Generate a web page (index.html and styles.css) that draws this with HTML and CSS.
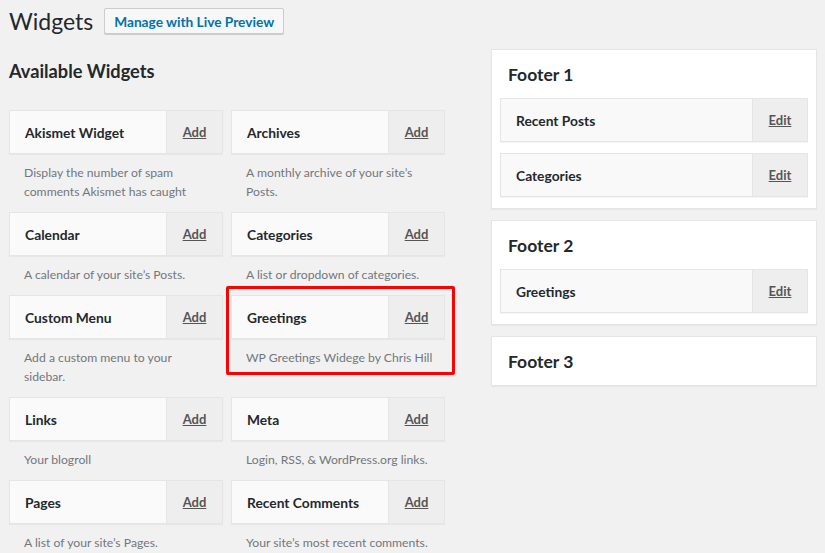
FILE: index.html
```html
<!DOCTYPE html>
<html>
<head>
<meta charset="utf-8">
<title>Widgets</title>
<link rel="stylesheet" href="styles.css">
</head>
<body>
<div class="wrap">
  <div class="head">
    <h1 class="title">Widgets</h1>
    <a class="btn">Manage with Live Preview</a>
  </div>
  <div class="cols">
    <div class="avail">
      <h2 class="avail-title">Available Widgets</h2>
      <div class="grid">
        <div class="widget">
          <div class="wbar"><span class="wname">Akismet Widget</span><span class="wact">Add</span></div>
          <p class="wdesc">Display the number of spam comments Akismet has caught</p>
        </div>
        <div class="widget">
          <div class="wbar"><span class="wname">Archives</span><span class="wact">Add</span></div>
          <p class="wdesc">A monthly archive of your site’s Posts.</p>
        </div>
        <div class="widget">
          <div class="wbar"><span class="wname">Calendar</span><span class="wact">Add</span></div>
          <p class="wdesc">A calendar of your site’s Posts.</p>
        </div>
        <div class="widget">
          <div class="wbar"><span class="wname">Categories</span><span class="wact">Add</span></div>
          <p class="wdesc">A list or dropdown of categories.</p>
        </div>
        <div class="widget">
          <div class="wbar"><span class="wname">Custom Menu</span><span class="wact">Add</span></div>
          <p class="wdesc">Add a custom menu to your sidebar.</p>
        </div>
        <div class="widget highlighted">
          <div class="wbar"><span class="wname">Greetings</span><span class="wact">Add</span></div>
          <p class="wdesc">WP Greetings Widege by Chris Hill</p>
          <div class="mark"></div>
        </div>
        <div class="widget">
          <div class="wbar"><span class="wname">Links</span><span class="wact">Add</span></div>
          <p class="wdesc">Your blogroll</p>
        </div>
        <div class="widget">
          <div class="wbar"><span class="wname">Meta</span><span class="wact">Add</span></div>
          <p class="wdesc">Login, RSS, &amp; WordPress.org links.</p>
        </div>
        <div class="widget">
          <div class="wbar"><span class="wname">Pages</span><span class="wact">Add</span></div>
          <p class="wdesc">A list of your site’s Pages.</p>
        </div>
        <div class="widget">
          <div class="wbar"><span class="wname">Recent Comments</span><span class="wact">Add</span></div>
          <p class="wdesc">Your site’s most recent comments.</p>
        </div>
      </div>
    </div>
    <div class="sidebars">
      <div class="sbox">
        <h3 class="sname">Footer 1</h3>
        <div class="swidget"><span class="wname">Recent Posts</span><span class="wact">Edit</span></div>
        <div class="swidget"><span class="wname">Categories</span><span class="wact">Edit</span></div>
      </div>
      <div class="sbox">
        <h3 class="sname">Footer 2</h3>
        <div class="swidget"><span class="wname">Greetings</span><span class="wact">Edit</span></div>
      </div>
      <div class="sbox">
        <h3 class="sname">Footer 3</h3>
      </div>
    </div>
  </div>
</div>
</body>
</html>
```

FILE: styles.css
```css
* { box-sizing: border-box; }
html, body { margin: 0; padding: 0; }
body {
  background: #f1f1f1;
  color: #23282d;
  font-family: Lato, "Open Sans", sans-serif;
  font-size: 13px;
  overflow: hidden;
}
.wrap { padding: 8px 8px 0 9px; }
.head { display: flex; align-items: center; gap: 11px; height: 26px; }
.title {
  margin: 0;
  font-size: 23px;
  font-weight: 400;
  line-height: 26px;
}
.btn {
  display: inline-flex;
  align-items: center;
  height: 26px;
  padding: 0 9px;
  border: 1px solid #ccc;
  border-radius: 2px;
  background: #f7f7f7;
  color: #0073aa;
  font-size: 13.7px;
  font-weight: 700;
  box-shadow: 0 1px 0 #ccc;
}
.cols { display: flex; gap: 46px; margin-top: 15px; }
.avail { width: 436px; }
.avail-title {
  margin: 10px 0 27px;
  font-size: 18.2px;
  font-weight: 700;
  line-height: 24px;
}
.grid {
  display: grid;
  grid-template-columns: 214px 214px;
  column-gap: 8px;
}
.widget { position: relative; }
.wbar, .swidget {
  display: flex;
  height: 44px;
  border: 1px solid #e5e5e5;
  background: #fafafa;
  box-shadow: 0 1px 1px rgba(0,0,0,0.04);
}
.wname {
  flex: 1;
  display: flex;
  align-items: center;
  padding-left: 15px;
  font-size: 13.8px;
  font-weight: 700;
  color: #23282d;
}
.wact {
  width: 56px;
  display: flex;
  align-items: center;
  justify-content: center;
  border-left: 1px solid #e5e5e5;
  background: #eee;
  color: #555;
  font-size: 13px;
  font-weight: 700;
  text-decoration: underline;
}
.wdesc {
  margin: 0;
  padding: 9px 8px 11px 15px;
  color: #72777c;
  font-size: 12.2px;
  line-height: 19px;
}
.mark {
  position: absolute;
  left: -5px;
  top: -9px;
  width: 229px;
  height: 89px;
  border: 3px solid #f00;
  border-radius: 2px;
}
.sidebars { width: 326px; display: flex; flex-direction: column; gap: 11px; }
.sbox {
  background: #fff;
  border: 1px solid #e5e5e5;
  box-shadow: 0 1px 1px rgba(0,0,0,0.04);
  padding: 0 8px;
}
.sname {
  margin: 0;
  height: 48px;
  display: flex;
  align-items: center;
  padding-left: 8px;
  font-size: 17.5px;
  font-weight: 700;
}
.swidget { margin-bottom: 11px; background: #f9f9f9; }
.swidget .wact { width: 55px; }
```
